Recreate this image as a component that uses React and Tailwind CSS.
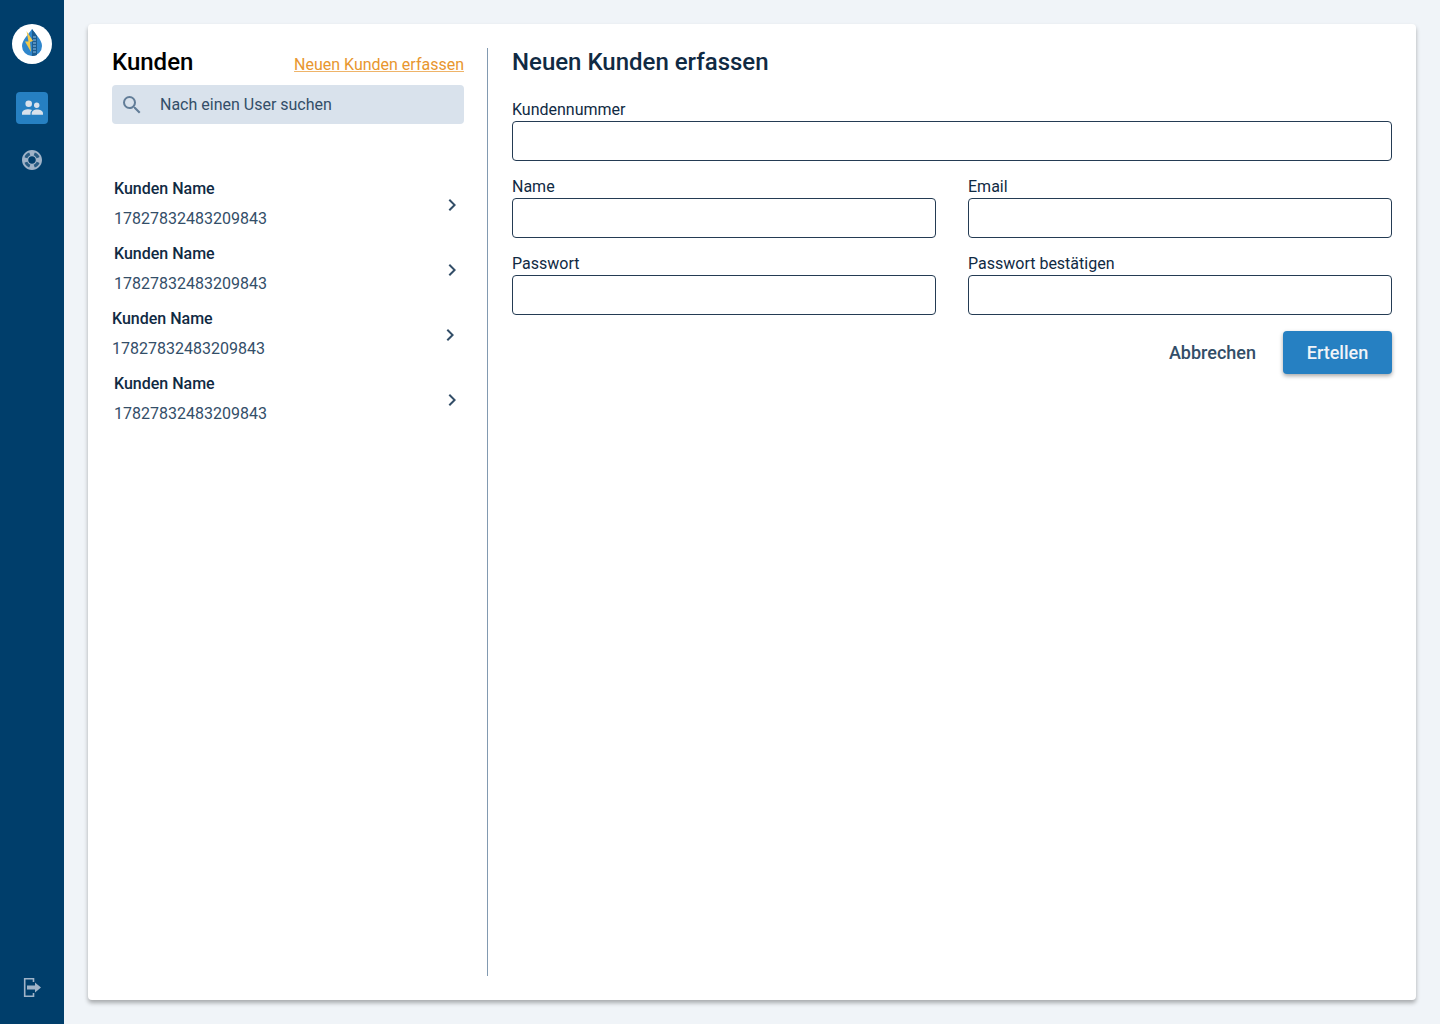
import React from 'react';

const customers = [
  { id: 1, name: 'Kunden Name', number: '17827832483209843', inset: 'pl-0.5 pr-0' },
  { id: 2, name: 'Kunden Name', number: '17827832483209843', inset: 'pl-0.5 pr-0' },
  { id: 3, name: 'Kunden Name', number: '17827832483209843', inset: 'pl-0 pr-0.5' },
  { id: 4, name: 'Kunden Name', number: '17827832483209843', inset: 'pl-0.5 pr-0' },
];

const Logo = () => (
  <div className="h-10 w-10 rounded-full bg-white">
    <svg width="40" height="40" viewBox="0 0 40 40">
      <path d="M20 5C16 11 10 16 10 22a10 10 0 0 0 20 0C30 16 24 11 20 5z" fill="#2f86cc" />
      <path d="M20 5c1.500 2.300 4 5 5 7v19a10 10 0 0 1-5 1z" fill="#1c5d91" />
      <path d="M21 13h3M21 16h3M21 19h3M21 22h3M21 25h3M21 28h3" stroke="#8fc1e8" strokeWidth="1" />
      <path d="M14.500 7L21 17l-3 1 1 10-6-10.500h3.500z" fill="#f2c94c" />
    </svg>
  </div>
);

const UsersIcon = () => (
  <svg width="32" height="32" viewBox="0 0 32 32" fill="#d9e2ec">
    <circle cx="12.700" cy="11.700" r="3.300" />
    <circle cx="20.700" cy="13.300" r="2.700" />
    <path d="M6 22.700v-1.500c0-2.500 3.200-3.900 6.500-3.900 1.300 0 2.600.2 3.600.6-1 .8-1.600 1.900-1.600 3.300v1.500z" />
    <path d="M15.700 22.700v-1.300c0-2.500 2.700-3.900 5.300-3.900 3 0 6 1.400 6 3.900v1.300z" />
  </svg>
);

const SupportIcon = () => (
  <svg width="24" height="24" viewBox="0 0 24 24" fill="#9fb3c8" className="m-1">
    <path d="M12 2C6.480 2 2 6.480 2 12s4.480 10 10 10 10-4.480 10-10S17.520 2 12 2zm7.460 7.120l-2.780 1.150c-.51-1.360-1.580-2.440-2.950-2.940l1.150-2.780c2.100.8 3.770 2.470 4.580 4.570zM12 15.800c-2.100 0-3.800-1.700-3.800-3.800s1.700-3.800 3.800-3.800 3.800 1.700 3.800 3.800-1.700 3.800-3.800 3.800zM9.130 4.540l1.170 2.780c-1.380.5-2.470 1.590-2.980 2.970L4.540 9.130c.81-2.110 2.480-3.780 4.590-4.590zM4.540 14.870l2.780-1.150c.51 1.380 1.590 2.460 2.970 2.960l-1.170 2.780c-2.100-.81-3.770-2.480-4.580-4.590zm10.340 4.590l-1.150-2.780c1.370-.51 2.450-1.590 2.950-2.970l2.780 1.170c-.81 2.100-2.480 3.770-4.580 4.580z" />
    <path fillOpacity="0.25" d="M19.460 9.120l-2.780 1.150c-.51-1.360-1.580-2.440-2.950-2.940l1.150-2.780c2.100.8 3.770 2.470 4.580 4.570zM9.130 4.540l1.170 2.780c-1.380.5-2.470 1.590-2.980 2.970L4.540 9.130c.81-2.110 2.480-3.780 4.590-4.590zM4.540 14.870l2.780-1.150c.51 1.380 1.590 2.460 2.970 2.960l-1.170 2.780c-2.100-.81-3.770-2.480-4.580-4.590zm10.340 4.590l-1.150-2.780c1.370-.51 2.450-1.590 2.950-2.970l2.780 1.170c-.81 2.100-2.480 3.770-4.580 4.580z" />
  </svg>
);

const LogoutIcon = () => (
  <svg width="32" height="32" viewBox="0 0 32 32" fill="none">
    <path d="M17.500 10V6.700H8.700V24.300H17.500V21" stroke="#9fb3c8" strokeWidth="1.600" />
    <path d="M11 13.500h8v-3l6 5-6 5v-3h-8z" fill="#9fb3c8" />
  </svg>
);

const SearchIcon = () => (
  <svg width="24" height="24" viewBox="0 0 24 24" fill="#627d98">
    <path d="M15.500 14h-.79l-.28-.27A6.471 6.471 0 0 0 16 9.500 6.500 6.500 0 1 0 9.500 16c1.610 0 3.090-.59 4.230-1.570l.27.28v.79l5 4.990L20.490 19l-4.990-5zm-6 0C7.010 14 5 11.990 5 9.500S7.010 5 9.500 5 14 7.010 14 9.500 11.990 14 9.500 14z" />
  </svg>
);

const ChevronIcon = () => (
  <svg width="24" height="24" viewBox="0 0 24 24" fill="#334e68" className="mt-[3px]">
    <path d="M10 6L8.590 7.410 13.170 12l-4.580 4.590L10 18l6-6z" />
  </svg>
);

const Field = ({ label }) => (
  <label className="block">
    <span className="block text-base leading-5 text-[#102a43]">{label}</span>
    <input className="block w-full h-10 mt-px rounded border border-[#243b53] bg-white outline-none" />
  </label>
);

export default function App() {
  return (
    <div className="flex h-screen bg-[#f0f4f8] font-['Roboto',sans-serif]">
      {/* Sidebar */}
      <aside className="w-16 shrink-0 bg-[#003e6b] flex flex-col items-center pt-6 pb-5">
        <Logo />
        <button className="mt-7 h-8 w-8 rounded bg-[#2680c2]">
          <UsersIcon />
        </button>
        <button className="mt-5 h-8 w-8">
          <SupportIcon />
        </button>
        <button className="mt-auto h-8 w-8">
          <LogoutIcon />
        </button>
      </aside>

      <main className="flex-1 p-6 min-w-0">
        <div className="h-full bg-white rounded shadow-[0_3px_4px_rgba(0,0,0,0.3)] p-6 flex">
          {/* Customer list */}
          <section className="w-[376px] shrink-0 pr-[23px] border-r border-[#829ab1]">
            <div className="flex items-end justify-between h-7">
              <h2 className="text-2xl leading-7 font-medium text-black">Kunden</h2>
              <a className="text-base leading-5 mb-px text-[#e8962e] underline decoration-[#efb469]">Neuen Kunden erfassen</a>
            </div>
            <div className="mt-[9px] h-[39px] rounded bg-[#d9e2ec] flex items-center pl-2 gap-4">
              <SearchIcon />
              <span className="text-base text-[#334e68]">Nach einen User suchen</span>
            </div>
            <ul className="mt-[47px]">
              {customers.map(c => (
                <li key={c.id} className={`h-[65px] flex items-center justify-between ${c.inset}`}>
                  <div>
                    <div className="text-base leading-[30px] font-medium text-[#102a43]">{c.name}</div>
                    <div className="text-base leading-[30px] text-[#334e68]">{c.number}</div>
                  </div>
                  <ChevronIcon />
                </li>
              ))}
            </ul>
          </section>

          {/* New customer form */}
          <section className="flex-1 pl-6 min-w-0">
            <h1 className="text-2xl leading-7 font-medium text-[#102a43]">Neuen Kunden erfassen</h1>
            <div className="mt-6">
              <Field label="Kundennummer" />
            </div>
            <div className="mt-4 grid grid-cols-2 gap-x-8 gap-y-4">
              <Field label="Name" />
              <Field label="Email" />
              <Field label="Passwort" />
              <Field label="Passwort bestätigen" />
            </div>
            <div className="mt-4 flex justify-end items-center gap-[27px]">
              <button className="text-lg font-medium text-[#334e68]">Abbrechen</button>
              <button className="h-[43px] w-[109px] rounded bg-[#2680c2] text-lg font-medium text-[#f0f4f8] shadow-[0_2px_4px_rgba(0,0,0,0.35)]">Ertellen</button>
            </div>
          </section>
        </div>
      </main>
    </div>
  );
}
